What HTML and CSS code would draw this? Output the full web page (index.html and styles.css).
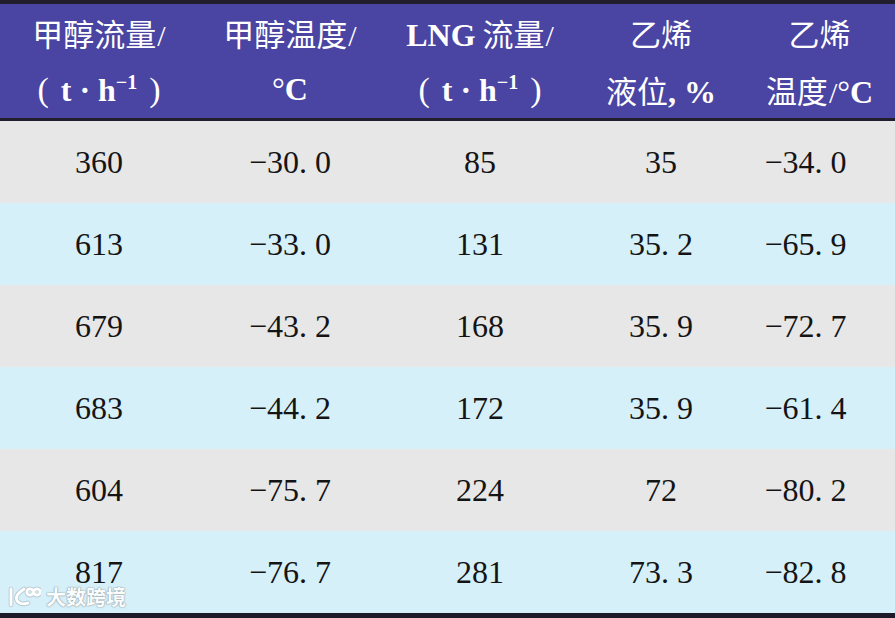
FILE: index.html
```html
<!DOCTYPE html>
<html lang="zh">
<head>
<meta charset="utf-8">
<title>表格</title>
<link rel="stylesheet" href="styles.css">
</head>
<body>
<div class="sheet">
  <div class="head">
    <div class="hcell"><span class="ln">甲醇流量<span class="sl">/</span></span><span class="ln lat"><span class="par">(</span> t · h<sup>−1</sup> <span class="par">)</span></span></div>
    <div class="hcell"><span class="ln">甲醇温度<span class="sl">/</span></span><span class="ln lat"><span class="deg">°</span>C</span></div>
    <div class="hcell"><span class="ln"><span class="lat">LNG</span> 流量<span class="sl">/</span></span><span class="ln lat"><span class="par">(</span> t · h<sup>−1</sup> <span class="par">)</span></span></div>
    <div class="hcell"><span class="ln">乙烯</span><span class="ln">液位<span class="lat">, %</span></span></div>
    <div class="hcell"><span class="ln">乙烯</span><span class="ln">温度<span class="sl">/</span><span class="lat"><span class="deg">°</span>C</span></span></div>
  </div>
  <div class="row gray"><div class="c">360</div><div class="c">−30. 0</div><div class="c">85</div><div class="c">35</div><div class="c last">−34. 0</div></div>
  <div class="row blue"><div class="c">613</div><div class="c">−33. 0</div><div class="c">131</div><div class="c">35. 2</div><div class="c last">−65. 9</div></div>
  <div class="row gray"><div class="c">679</div><div class="c">−43. 2</div><div class="c">168</div><div class="c">35. 9</div><div class="c last">−72. 7</div></div>
  <div class="row blue"><div class="c">683</div><div class="c">−44. 2</div><div class="c">172</div><div class="c">35. 9</div><div class="c last">−61. 4</div></div>
  <div class="row gray"><div class="c">604</div><div class="c">−75. 7</div><div class="c">224</div><div class="c">72</div><div class="c last">−80. 2</div></div>
  <div class="row blue"><div class="c">817</div><div class="c">−76. 7</div><div class="c">281</div><div class="c">73. 3</div><div class="c last">−82. 8</div></div>
  <div class="mark">
    <svg class="logo" width="34" height="22" viewBox="0 0 34 22">
      <g fill="none" stroke="#9aa3ab" stroke-width="4.6" stroke-linecap="round" stroke-linejoin="round" opacity="0.5">
        <path d="M4 3 L4 19"/>
        <path d="M17 3 C11 7 8.5 10.5 9.5 13.5 C11 17.5 16 19 21 17"/>
        <circle cx="23" cy="6" r="3.2"/>
        <circle cx="30" cy="6" r="3.2"/>
      </g>
      <g fill="none" stroke="#ffffff" stroke-width="2.8" stroke-linecap="round" stroke-linejoin="round">
        <path d="M4 3 L4 19"/>
        <path d="M17 3 C11 7 8.5 10.5 9.5 13.5 C11 17.5 16 19 21 17"/>
        <circle cx="23" cy="6" r="3.2"/>
        <circle cx="30" cy="6" r="3.2"/>
      </g>
    </svg>
    <span class="brand">大数跨境</span>
  </div>
</div>
</body>
</html>
```

FILE: styles.css
```css
html, body {
  margin: 0;
  padding: 0;
  background: #1f1c2a;
}
.sheet {
  position: relative;
  width: 895px;
  height: 618px;
  box-sizing: border-box;
  border-top: 4px solid #221e2e;
  border-bottom: 5px solid #1e1b28;
  background: #e8e8e8;
  overflow: hidden;
}
.head, .row {
  display: grid;
  grid-template-columns: 198px 184px 196px 166px 151px;
}
.head {
  height: 114px;
  background: #4a44a2;
  border-bottom: 3px solid #221e2e;
  color: #ffffff;
  font-family: "Noto Sans CJK SC", "Noto Sans", sans-serif;
  font-weight: 400;
  font-size: 31px;
}
.hcell {
  display: flex;
  flex-direction: column;
  align-items: center;
}
.ln {
  height: 57px;
  line-height: 57px;
  white-space: pre;
}
.lat {
  font-family: "Liberation Serif", "Times New Roman", serif;
  font-weight: 700;
  font-size: 32px;
}
.lat sup {
  font-size: 20px;
  vertical-align: 12px;
  line-height: 0;
}
.par {
  font-weight: 400;
  font-size: 34px;
  padding: 0 4px;
}
.deg {
  font-weight: 400;
}
.sl {
  font-family: "Liberation Serif", serif;
  font-weight: 400;
  font-size: 30px;
  margin-left: 1px;
}
.row {
  height: 82px;
  font-family: "Liberation Serif", "Times New Roman", serif;
  font-size: 32px;
  color: #141414;
}
.gray { background: #e7e7e7; }
.blue { background: #d6f0f9; }
.c {
  display: flex;
  align-items: center;
  justify-content: center;
  white-space: pre;
}
.c.last {
  padding-right: 28px;
}
.mark {
  position: absolute;
  left: 7px;
  bottom: 5px;
  display: flex;
  align-items: center;
  gap: 5px;
}
.brand {
  font-family: "Noto Sans CJK SC", sans-serif;
  font-weight: 700;
  font-size: 20px;
  line-height: 20px;
  color: #ffffff;
  text-shadow: 0 0 1px #8f98a0, 0 0 1px #8f98a0, 0 0 2px #a0a8b0;
  opacity: 0.9;
}
```
